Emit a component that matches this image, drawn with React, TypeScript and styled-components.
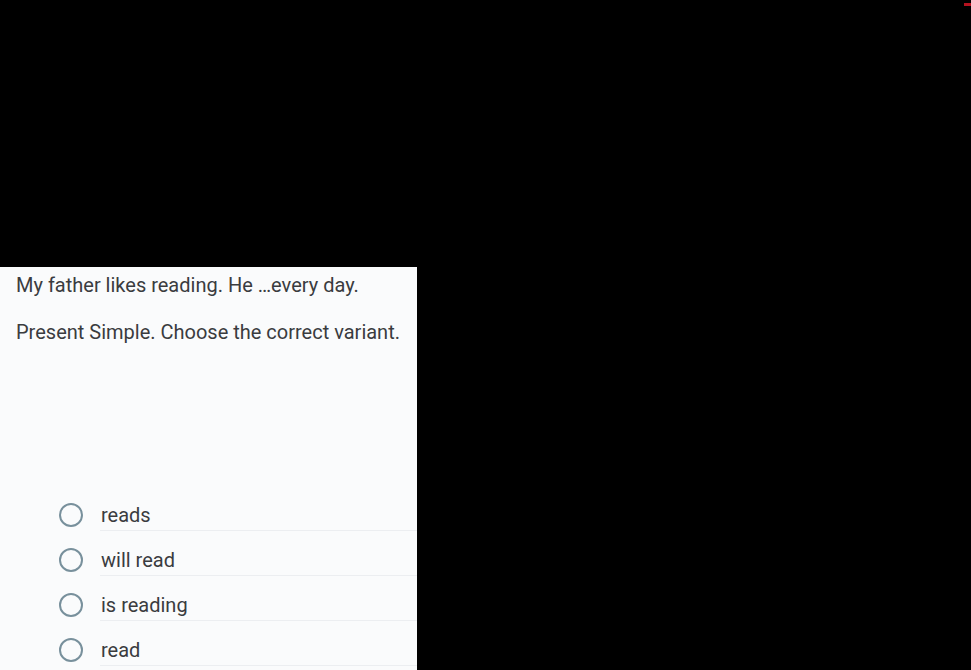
import styled, { createGlobalStyle } from 'styled-components';

const GlobalStyle = createGlobalStyle`
    html, body {
        margin: 0;
        padding: 0;
        background: #000;
        height: 100%;
        overflow: hidden;
    }
    #root {
        height: 100%;
    }
`;

const Screen = styled.div`
    position: relative;
    display: flex;
    flex-direction: column;
    height: 670px;
    background: #000;
    font-family: Roboto, 'Noto Sans', sans-serif;
`;

const TopArea = styled.div`
    height: 267px;
    flex-shrink: 0;
`;

const StageRow = styled.div`
    display: flex;
    flex: 1;
    min-height: 0;
`;

const QuestionPanel = styled.div`
    width: 417px;
    flex-shrink: 0;
    background: #fafbfc;
    color: #3a3c3f;
    padding: 0 0 0 16px;
    box-sizing: border-box;
    display: flex;
    flex-direction: column;
    overflow: hidden;
`;

const Question = styled.p`
    margin: 7px 0 0;
    font-size: 20px;
    line-height: 23px;
`;

const Hint = styled.p`
    margin: 24px 0 0;
    font-size: 20px;
    line-height: 23px;
`;

const Options = styled.ul`
    list-style: none;
    margin: 148px 0 0;
    padding: 0 0 0 43px;
    display: flex;
    flex-direction: column;
`;

const Option = styled.li`
    display: flex;
    align-items: center;
    height: 45px;
`;

const RadioCell = styled.div`
    width: 41px;
    flex-shrink: 0;
    display: flex;
    align-items: center;
`;

const Radio = styled.span`
    width: 24px;
    height: 24px;
    box-sizing: border-box;
    border: 2px solid #78909c;
    border-radius: 50%;
`;

const Label = styled.div`
    flex: 1;
    height: 31px;
    line-height: 30px;
    font-size: 20px;
    padding-left: 1px;
    border-bottom: 1px solid #eceef1;
    box-sizing: border-box;
    margin-top: 1px;
`;

const CornerMark = styled.span`
    position: absolute;
    top: 3px;
    right: 0;
    width: 7px;
    height: 3px;
    background: #b3121f;
`;

const options = ['reads', 'will read', 'is reading', 'read'];

const App = () => {
    return (
        <>
            <GlobalStyle />
            <Screen>
                <TopArea />
                <StageRow>
                    <QuestionPanel>
                        <Question>My father likes reading. He …every day.</Question>
                        <Hint>Present Simple. Choose the correct variant.</Hint>
                        <Options>
                            {options.map((o) => (
                                <Option key={o}>
                                    <RadioCell>
                                        <Radio />
                                    </RadioCell>
                                    <Label>{o}</Label>
                                </Option>
                            ))}
                        </Options>
                    </QuestionPanel>
                </StageRow>
                <CornerMark />
            </Screen>
        </>
    );
};

export default App;
